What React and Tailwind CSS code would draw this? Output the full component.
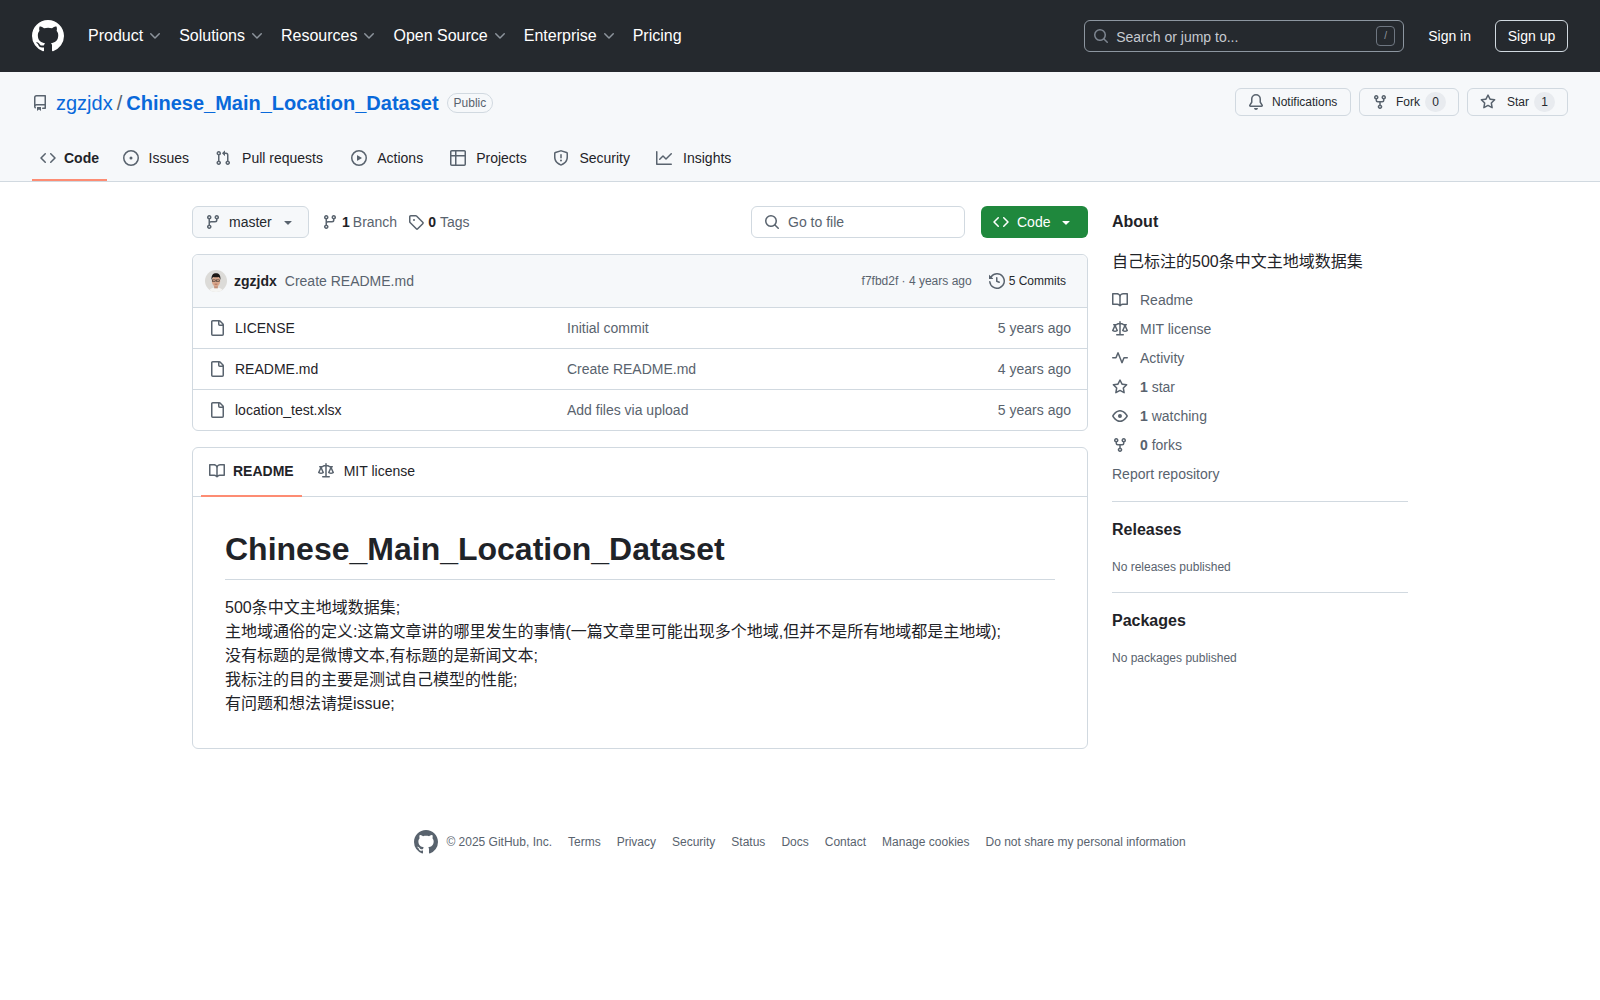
const ICONS = {
  mark: 'M8 0c4.42 0 8 3.58 8 8a8.013 8.013 0 0 1-5.45 7.59c-.4.08-.55-.17-.55-.38 0-.27.01-1.13.01-2.2 0-.75-.25-1.23-.54-1.48 1.78-.2 3.65-.88 3.65-3.95 0-.88-.31-1.59-.82-2.15.08-.2.36-1.02-.08-2.12 0 0-.67-.22-2.2.82-.64-.18-1.32-.27-2-.27-.68 0-1.36.09-2 .27-1.53-1.03-2.2-.82-2.2-.82-.44 1.1-.16 1.92-.08 2.12-.51.56-.82 1.28-.82 2.15 0 3.06 1.86 3.75 3.64 3.95-.23.2-.44.55-.51 1.07-.46.21-1.61.55-2.33-.66-.15-.24-.6-.83-1.23-.82-.67.01-.27.38.01.53.34.19.73.9.82 1.13.16.45.68 1.31 2.69.94 0 .67.01 1.3.01 1.49 0 .21-.15.45-.55.38A7.995 7.995 0 0 1 0 8c0-4.42 3.58-8 8-8Z',
  repo: 'M2 2.5A2.5 2.5 0 0 1 4.5 0h8.75a.75.75 0 0 1 .75.75v12.5a.75.75 0 0 1-.75.75h-2.5a.75.75 0 0 1 0-1.5h1.75v-2h-8a1 1 0 0 0-.714 1.7.75.75 0 1 1-1.072 1.05A2.495 2.495 0 0 1 2 11.5Zm10.5-1h-8a1 1 0 0 0-1 1v6.708A2.486 2.486 0 0 1 4.5 9h8ZM5 12.25a.25.25 0 0 1 .25-.25h3.5a.25.25 0 0 1 .25.25v3.25a.25.25 0 0 1-.4.2l-1.45-1.087a.249.249 0 0 0-.3 0L5.4 15.7a.25.25 0 0 1-.4-.2Z',
  code: 'm11.28 3.22 4.25 4.25a.75.75 0 0 1 0 1.06l-4.25 4.25a.749.749 0 0 1-1.275-.326.749.749 0 0 1 .215-.734L13.94 8l-3.72-3.72a.749.749 0 0 1 .326-1.275.749.749 0 0 1 .734.215Zm-6.56 0a.751.751 0 0 1 1.042.018.751.751 0 0 1 .018 1.042L2.06 8l3.72 3.72a.749.749 0 0 1-.326 1.275.749.749 0 0 1-.734-.215L.47 8.53a.75.75 0 0 1 0-1.06Z',
  issue: 'M8 9.5a1.5 1.5 0 1 0 0-3 1.5 1.5 0 0 0 0 3ZM8 0a8 8 0 1 1 0 16A8 8 0 0 1 8 0ZM1.5 8a6.5 6.5 0 1 0 13 0 6.5 6.5 0 0 0-13 0Z',
  pull: 'M1.5 3.25a2.25 2.25 0 1 1 3 2.122v5.256a2.251 2.251 0 1 1-1.5 0V5.372A2.25 2.25 0 0 1 1.5 3.25Zm5.677-.177L9.573.677A.25.25 0 0 1 10 .854V2.5h1A2.5 2.5 0 0 1 13.5 5v5.628a2.251 2.251 0 1 1-1.5 0V5a1 1 0 0 0-1-1h-1v1.646a.25.25 0 0 1-.427.177L7.177 3.427a.25.25 0 0 1 0-.354ZM3.75 2.5a.75.75 0 1 0 0 1.5.75.75 0 0 0 0-1.5Zm0 9.5a.75.75 0 1 0 0 1.5.75.75 0 0 0 0-1.5Zm8.25.75a.75.75 0 1 0 1.5 0 .75.75 0 0 0-1.5 0Z',
  play: 'M8 0a8 8 0 1 1 0 16A8 8 0 0 1 8 0ZM1.5 8a6.5 6.5 0 1 0 13 0 6.5 6.5 0 0 0-13 0Zm4.879-2.773 4.264 2.559a.25.25 0 0 1 0 .428l-4.264 2.559A.25.25 0 0 1 6 10.559V5.442a.25.25 0 0 1 .379-.215Z',
  table: 'M0 1.75C0 .784.784 0 1.75 0h12.5C15.216 0 16 .784 16 1.75v12.5A1.75 1.75 0 0 1 14.25 16H1.75A1.75 1.75 0 0 1 0 14.25ZM6.5 6.5v8h7.75a.25.25 0 0 0 .25-.25V6.5Zm8-1.5V1.75a.25.25 0 0 0-.25-.25H6.5V5Zm-13 1.5v7.75c0 .138.112.25.25.25H5v-8ZM5 5V1.5H1.75a.25.25 0 0 0-.25.25V5Z',
  shield: 'M7.467.133a1.748 1.748 0 0 1 1.066 0l5.25 1.68A1.75 1.75 0 0 1 15 3.48V7c0 1.566-.32 3.182-1.303 4.682-.983 1.498-2.585 2.813-5.032 3.855a1.697 1.697 0 0 1-1.33 0c-2.447-1.042-4.049-2.357-5.032-3.855C1.32 10.182 1 8.566 1 7V3.48a1.75 1.75 0 0 1 1.217-1.667Zm.61 1.429a.25.25 0 0 0-.153 0l-5.25 1.68a.25.25 0 0 0-.174.238V7c0 1.358.275 2.666 1.057 3.86.784 1.194 2.121 2.34 4.366 3.297a.196.196 0 0 0 .154 0c2.245-.956 3.582-2.104 4.366-3.298C13.225 9.666 13.5 8.36 13.5 7V3.48a.251.251 0 0 0-.174-.237l-5.25-1.68ZM8.75 4.75v3a.75.75 0 0 1-1.5 0v-3a.75.75 0 0 1 1.5 0ZM9 10.5a1 1 0 1 1-2 0 1 1 0 0 1 2 0Z',
  graph: 'M1.5 1.75V13.5h13.75a.75.75 0 0 1 0 1.5H.75a.75.75 0 0 1-.75-.75V1.75a.75.75 0 0 1 1.5 0Zm14.28 2.53-5.25 5.25a.75.75 0 0 1-1.06 0L7 7.06 4.28 9.78a.751.751 0 0 1-1.042-.018.751.751 0 0 1-.018-1.042l3.25-3.25a.75.75 0 0 1 1.06 0L10 7.94l4.72-4.72a.751.751 0 0 1 1.042.018.751.751 0 0 1 .018 1.042Z',
  bell: 'M8 16a2 2 0 0 0 1.985-1.75c.017-.137-.097-.25-.235-.25h-3.5c-.138 0-.252.113-.235.25A2 2 0 0 0 8 16ZM3 5a5 5 0 0 1 10 0v2.947c0 .05.015.098.042.139l1.703 2.555A1.519 1.519 0 0 1 13.482 13H2.518a1.516 1.516 0 0 1-1.263-2.36l1.703-2.554A.255.255 0 0 0 3 7.947Zm5-3.5A3.5 3.5 0 0 0 4.5 5v2.947c0 .346-.102.683-.294.97l-1.703 2.556a.017.017 0 0 0-.003.01l.001.006c0 .002.002.004.004.006l.006.004.007.001h10.964l.007-.001.006-.004.004-.006.001-.007a.017.017 0 0 0-.003-.01l-1.703-2.554a1.745 1.745 0 0 1-.294-.97V5A3.5 3.5 0 0 0 8 1.5Z',
  fork: 'M5 5.372v.878c0 .414.336.75.75.75h4.5a.75.75 0 0 0 .75-.75v-.878a2.25 2.25 0 1 1 1.5 0v.878a2.25 2.25 0 0 1-2.25 2.25h-1.5v2.128a2.251 2.251 0 1 1-1.5 0V8.5h-1.5A2.25 2.25 0 0 1 3.5 6.25v-.878a2.25 2.25 0 1 1 1.5 0ZM5 3.25a.75.75 0 1 0-1.5 0 .75.75 0 0 0 1.5 0Zm6.75.75a.75.75 0 1 0 0-1.5.75.75 0 0 0 0 1.5Zm-3 8.75a.75.75 0 1 0-1.5 0 .75.75 0 0 0 1.5 0Z',
  star: 'M8 .25a.75.75 0 0 1 .673.418l1.882 3.815 4.21.612a.75.75 0 0 1 .416 1.279l-3.046 2.97.719 4.192a.751.751 0 0 1-1.088.791L8 12.347l-3.766 1.98a.75.75 0 0 1-1.088-.79l.72-4.194L.818 6.374a.75.75 0 0 1 .416-1.28l4.21-.611L7.327.668A.75.75 0 0 1 8 .25Zm0 2.445L6.615 5.5a.75.75 0 0 1-.564.41l-3.097.45 2.24 2.184a.75.75 0 0 1 .216.664l-.528 3.084 2.769-1.456a.75.75 0 0 1 .698 0l2.77 1.456-.53-3.084a.75.75 0 0 1 .216-.664l2.24-2.183-3.096-.45a.75.75 0 0 1-.564-.41L8 2.694Z',
  branch: 'M9.5 3.25a2.25 2.25 0 1 1 3 2.122V6A2.5 2.5 0 0 1 10 8.5H6a1 1 0 0 0-1 1v1.128a2.251 2.251 0 1 1-1.5 0V5.372a2.25 2.25 0 1 1 1.5 0v1.836A2.493 2.493 0 0 1 6 7h4a1 1 0 0 0 1-1v-.628A2.25 2.25 0 0 1 9.5 3.25Zm-6 0a.75.75 0 1 0 1.5 0 .75.75 0 0 0-1.5 0Zm8.25-.75a.75.75 0 1 0 0 1.5.75.75 0 0 0 0-1.5ZM4.25 12a.75.75 0 1 0 0 1.5.75.75 0 0 0 0-1.5Z',
  tag: 'M1 7.775V2.75C1 1.784 1.784 1 2.75 1h5.025c.464 0 .91.184 1.238.513l6.25 6.25a1.75 1.75 0 0 1 0 2.474l-5.026 5.026a1.75 1.75 0 0 1-2.474 0l-6.25-6.25A1.752 1.752 0 0 1 1 7.775Zm1.5 0c0 .066.026.13.073.177l6.25 6.25a.25.25 0 0 0 .354 0l5.025-5.025a.25.25 0 0 0 0-.354l-6.25-6.25a.25.25 0 0 0-.177-.073H2.75a.25.25 0 0 0-.25.25ZM6 5a1 1 0 1 1 0 2 1 1 0 0 1 0-2Z',
  search: 'M10.68 11.74a6 6 0 0 1-7.922-8.982 6 6 0 0 1 8.982 7.922l3.04 3.04a.749.749 0 0 1-.326 1.275.749.749 0 0 1-.734-.215ZM11.5 7a4.499 4.499 0 1 0-8.997 0A4.499 4.499 0 0 0 11.5 7Z',
  caret: 'm4.427 7.427 3.396 3.396a.25.25 0 0 0 .354 0l3.396-3.396A.25.25 0 0 0 11.396 7H4.604a.25.25 0 0 0-.177.427Z',
  chevron: 'M12.78 5.22a.749.749 0 0 1 0 1.06l-4.25 4.25a.749.749 0 0 1-1.06 0L3.22 6.28a.749.749 0 1 1 1.06-1.06L8 8.939l3.72-3.719a.749.749 0 0 1 1.06 0Z',
  history: 'm.427 1.927 1.215 1.215a8.002 8.002 0 1 1-1.6 5.685.75.75 0 1 1 1.493-.154 6.5 6.5 0 1 0 1.18-4.458l1.358 1.358A.25.25 0 0 1 3.896 6H.25A.25.25 0 0 1 0 5.75V2.104a.25.25 0 0 1 .427-.177ZM7.75 4a.75.75 0 0 1 .75.75v2.992l2.028.812a.75.75 0 0 1-.557 1.392l-2.5-1A.751.751 0 0 1 7 8.25v-3.5A.75.75 0 0 1 7.75 4Z',
  file: 'M2 1.75C2 .784 2.784 0 3.75 0h6.586c.464 0 .909.184 1.237.513l2.914 2.914c.329.328.513.773.513 1.237v9.586A1.75 1.75 0 0 1 13.25 16h-9.5A1.75 1.75 0 0 1 2 14.25Zm1.75-.25a.25.25 0 0 0-.25.25v12.5c0 .138.112.25.25.25h9.5a.25.25 0 0 0 .25-.25V6h-2.75A1.75 1.75 0 0 1 9 4.25V1.5Zm6.75.062V4.25c0 .138.112.25.25.25h2.688l-.011-.013-2.914-2.914-.013-.011Z',
  book: 'M0 1.75A.75.75 0 0 1 .75 1h4.253c1.227 0 2.317.59 3 1.501A3.743 3.743 0 0 1 11.006 1h4.245a.75.75 0 0 1 .75.75v10.5a.75.75 0 0 1-.75.75h-4.507a2.25 2.25 0 0 0-1.591.659l-.622.621a.75.75 0 0 1-1.06 0l-.622-.621A2.25 2.25 0 0 0 5.258 13H.75a.75.75 0 0 1-.75-.75Zm7.251 10.324.004-5.073-.002-2.253A2.25 2.25 0 0 0 5.003 2.5H1.5v9h3.757a3.75 3.75 0 0 1 1.994.574ZM8.755 4.75l-.004 7.322a3.752 3.752 0 0 1 1.992-.572H14.5v-9h-3.495a2.25 2.25 0 0 0-2.25 2.25Z',
  law: 'M8.75.75V2h.985c.304 0 .603.08.867.231l1.29.736c.038.022.08.033.124.033h2.234a.75.75 0 0 1 0 1.5h-.427l2.111 4.692a.75.75 0 0 1-.154.838l-.53-.53.529.531-.001.002-.002.002-.006.006-.006.005-.01.01-.045.04c-.21.176-.441.327-.686.45C14.556 10.78 13.88 11 13 11a4.498 4.498 0 0 1-2.023-.454 3.544 3.544 0 0 1-.686-.45l-.045-.04-.016-.015-.006-.006-.004-.004v-.001a.75.75 0 0 1-.154-.838L12.178 4.5h-.162c-.305 0-.604-.079-.868-.231l-1.29-.736a.245.245 0 0 0-.124-.033H8.75V13h2.5a.75.75 0 0 1 0 1.5h-6.5a.75.75 0 0 1 0-1.5h2.5V3.5h-.984a.245.245 0 0 0-.124.033l-1.289.737c-.265.15-.564.23-.869.23h-.162l2.112 4.692a.75.75 0 0 1-.154.838l-.53-.53.529.531-.001.002-.002.002-.006.006-.016.015-.045.04c-.21.176-.441.327-.686.45C4.556 10.78 3.88 11 3 11a4.498 4.498 0 0 1-2.023-.454 3.544 3.544 0 0 1-.686-.45l-.045-.04-.016-.015-.006-.006-.004-.004v-.001a.75.75 0 0 1-.154-.838L2.178 4.5H1.75a.75.75 0 0 1 0-1.5h2.234a.249.249 0 0 0 .125-.033l1.288-.737c.265-.15.564-.23.869-.23h.984V.75a.75.75 0 0 1 1.5 0Zm2.945 8.477c.285.135.718.273 1.305.273s1.02-.138 1.305-.273L13 6.327Zm-10 0c.285.135.718.273 1.305.273s1.02-.138 1.305-.273L3 6.327Z',
  pulse: 'M6 2c.306 0 .582.187.696.471L10 10.731l1.304-3.26A.751.751 0 0 1 12 7h3.25a.75.75 0 0 1 0 1.5h-2.742l-1.812 4.528a.751.751 0 0 1-1.392 0L6 4.77 4.696 8.03A.75.75 0 0 1 4 8.5H.75a.75.75 0 0 1 0-1.5h2.742l1.812-4.529A.751.751 0 0 1 6 2Z',
  eye: 'M8 2c1.981 0 3.671.992 4.933 2.078 1.27 1.091 2.187 2.345 2.637 3.023a1.62 1.62 0 0 1 0 1.798c-.45.678-1.367 1.932-2.637 3.023C11.67 13.008 9.981 14 8 14c-1.981 0-3.671-.992-4.933-2.078C1.797 10.83.88 9.576.43 8.898a1.62 1.62 0 0 1 0-1.798c.45-.677 1.367-1.931 2.637-3.022C4.33 2.992 6.019 2 8 2ZM1.679 7.932a.12.12 0 0 0 0 .136c.411.622 1.241 1.75 2.366 2.717C5.176 11.758 6.527 12.5 8 12.5c1.473 0 2.825-.742 3.955-1.715 1.124-.967 1.954-2.096 2.366-2.717a.12.12 0 0 0 0-.136c-.412-.621-1.242-1.75-2.366-2.717C10.824 4.242 9.473 3.5 8 3.5c-1.473 0-2.825.742-3.955 1.715-1.124.967-1.954 2.096-2.366 2.717ZM8 10a2 2 0 1 1-.001-3.999A2 2 0 0 1 8 10Z',
}

function Icon({ name, size = 16, className = '' }) {
  return (
    <svg viewBox="0 0 16 16" width={size} height={size} fill="currentColor" className={`shrink-0 ${className}`}>
      <path d={ICONS[name]} />
    </svg>
  )
}

function Avatar() {
  return (
    <svg viewBox="0 0 24 24" width="22" height="22" className="shrink-0 rounded-full">
      <rect width="24" height="24" fill="#dcdbd8" />
      <path d="M4 24c1-4 4-5 8-5s7 1 8 5Z" fill="#f5f5f3" />
      <rect x="10" y="16" width="4" height="4" fill="#c08f78" />
      <ellipse cx="12" cy="12" rx="4.600" ry="6" fill="#d9a78c" />
      <path d="M7.200 11C6.500 5.500 9 3.500 12 3.500s5.500 2 4.800 7.500c-.4-2-1-3-1.800-3.500-2 .5-4 .5-6 0-.8.500-1.400 1.500-1.800 3.500Z" fill="#1d1917" />
      <rect x="8.200" y="10.800" width="3.200" height="1.700" fill="none" stroke="#2e2826" strokeWidth="0.6" />
      <rect x="12.600" y="10.800" width="3.200" height="1.700" fill="none" stroke="#2e2826" strokeWidth="0.6" />
      <path d="M10.500 15.500h3" stroke="#96513f" strokeWidth="0.7" />
    </svg>
  )
}

const NAV = ['Product', 'Solutions', 'Resources', 'Open Source', 'Enterprise']
const TABS = [
  ['code', 'Code'],
  ['issue', 'Issues'],
  ['pull', 'Pull requests'],
  ['play', 'Actions'],
  ['table', 'Projects'],
  ['shield', 'Security'],
  ['graph', 'Insights'],
]
const FILES = [
  ['LICENSE', 'Initial commit', '5 years ago'],
  ['README.md', 'Create README.md', '4 years ago'],
  ['location_test.xlsx', 'Add files via upload', '5 years ago'],
]
const FOOTER = ['Terms', 'Privacy', 'Security', 'Status', 'Docs', 'Contact', 'Manage cookies', 'Do not share my personal information']
const README_LINES = [
  '500条中文主地域数据集;',
  '主地域通俗的定义:这篇文章讲的哪里发生的事情(一篇文章里可能出现多个地域,但并不是所有地域都是主地域);',
  '没有标题的是微博文本,有标题的是新闻文本;',
  '我标注的目的主要是测试自己模型的性能;',
  '有问题和想法请提issue;',
]

function Header() {
  return (
    <header className="h-[72px] bg-[#25292e] px-8 flex items-center text-white">
      <Icon name="mark" size={32} className="mr-4" />
      <nav className="flex items-center text-base">
        {NAV.map((item) => (
          <div key={item} className="flex items-center px-2 gap-1">
            {item}
            <Icon name="chevron" className="text-[#8d949c]" />
          </div>
        ))}
        <div className="px-2">Pricing</div>
      </nav>
      <div className="ml-auto w-80 h-8 rounded-md border border-[#8d96a0] flex items-center px-2 text-sm text-[#c5cad0]">
        <Icon name="search" className="text-[#7d8590] mr-[7px]" />
        <span className="pt-px">Search or jump to...</span>
        <span className="ml-auto w-[19px] h-[20px] border border-[#6e7681] rounded-[4px] flex items-center justify-center text-[10px] text-[#9198a1]">/</span>
      </div>
      <span className="ml-6 text-sm">Sign in</span>
      <span className="ml-6 h-8 w-[73px] flex items-center justify-center text-sm border border-[#d1d9e0] rounded-md">Sign up</span>
    </header>
  )
}

function ActionButton({ icon, label, count, className }) {
  return (
    <div className={`h-7 flex items-center pl-3 border border-[#d1d9e0] rounded-md text-xs font-medium text-[#25292e] ${className}`}>
      <Icon name={icon} className="text-[#59636e]" />
      <span>{label}</span>
      {count && <span className="pill w-[21px] h-5 rounded-full bg-[#e8ebef] flex items-center justify-center text-[#25292e]">{count}</span>}
    </div>
  )
}

function RepoHeader() {
  return (
    <div className="bg-[#f6f8fa] border-b border-[#d1d9e0]">
      <div className="px-8 pt-4 flex items-start">
        <div className="flex items-center h-[30px]">
          <Icon name="repo" className="text-[#59636e] mr-2" />
          <span className="text-xl text-[#0969da]">zgzjdx</span>
          <span className="text-xl text-[#59636e] mx-1">/</span>
          <span className="text-xl font-bold text-[#0969da]">Chinese_Main_Location_Dataset</span>
          <span className="ml-2 h-5 px-[6px] border border-[#d1d9e0] rounded-full text-xs flex items-center text-[#59636e]">Public</span>
        </div>
        <div className="ml-auto flex gap-2">
          <ActionButton icon="bell" label="Notifications" className="w-[116px] gap-2" />
          <ActionButton icon="fork" label="Fork" count="0" className="w-[100px] gap-2 [&>.pill]:-ml-[3px]" />
          <ActionButton icon="star" label="Star" count="1" className="w-[101px] gap-[11px] [&>.pill]:-ml-[6px]" />
        </div>
      </div>
      <nav className="px-8 mt-[17px] flex gap-2 text-sm text-[#1f2328]">
        {TABS.map(([icon, label], i) => (
          <div key={label} className={`h-[46px] pt-[2px] flex items-center gap-2 px-2 border-b-2 ${i === 0 ? 'border-[#fd8c73] font-bold' : 'border-transparent'}`}>
            <Icon name={icon} className="text-[#59636e]" />
            <span className="grid justify-items-center">
              <span className="col-start-1 row-start-1">{label}</span>
              <span className="col-start-1 row-start-1 font-bold invisible">{label}</span>
            </span>
          </div>
        ))}
      </nav>
    </div>
  )
}

function FileBar() {
  return (
    <div className="flex items-center h-8 text-sm">
      <div className="h-8 w-[117px] border border-[#d1d9e0] rounded-md bg-[#f6f8fa] flex items-center pl-3 text-[#25292e]">
        <Icon name="branch" className="text-[#59636e]" />
        <span className="ml-[8px]">master</span>
        <Icon name="caret" className="text-[#59636e] ml-[8px]" />
      </div>
      <div className="ml-[13px] flex items-center text-[#59636e]">
        <Icon name="branch" />
        <b className="ml-1 text-[#1f2328]">1</b>
        <span className="ml-[3px]">Branch</span>
      </div>
      <div className="ml-[11px] flex items-center text-[#59636e]">
        <Icon name="tag" />
        <b className="ml-1 text-[#1f2328]">0</b>
        <span className="ml-1">Tags</span>
      </div>
      <div className="ml-auto w-[214px] h-8 border border-[#d1d9e0] rounded-md flex items-center pl-3 text-[#59636e]">
        <Icon name="search" className="mr-2" />
        Go to file
      </div>
      <div className="ml-4 w-[107px] h-8 rounded-md bg-[#1f883d] text-white font-medium flex items-center pl-3">
        <Icon name="code" />
        <span className="ml-2">Code</span>
        <Icon name="caret" className="ml-2" />
      </div>
    </div>
  )
}

function FileTable() {
  return (
    <div className="mt-4 border border-[#d1d9e0] rounded-md text-sm">
      <div className="h-[52px] bg-[#f6f8fa] rounded-t-md flex items-center pl-3 pr-[21px]">
        <Avatar />
        <b className="ml-[7px] text-[#1f2328]">zgzjdx</b>
        <span className="ml-2 text-[#59636e]">Create README.md</span>
        <span className="ml-auto text-xs text-[#59636e]">f7fbd2f · 4 years ago</span>
        <Icon name="history" className="ml-[17px] text-[#59636e]" />
        <span className="ml-[4px] text-xs font-medium text-[#25292e]">5 Commits</span>
      </div>
      {FILES.map(([name, msg, age]) => (
        <div key={name} className="h-[41px] border-t border-[#d1d9e0] flex items-center pl-4 pr-4">
          <Icon name="file" className="text-[#59636e]" />
          <span className="ml-[10px] w-[332px] text-[#1f2328]">{name}</span>
          <span className="text-[#59636e]">{msg}</span>
          <span className="ml-auto text-[#59636e]">{age}</span>
        </div>
      ))}
    </div>
  )
}

function Readme() {
  return (
    <div className="mt-4 border border-[#d1d9e0] rounded-md">
      <div className="h-[49px] border-b border-[#d1d9e0] flex items-stretch pl-2 text-sm text-[#1f2328]">
        <div className="flex items-center gap-2 px-2 pb-[2px] border-b-2 border-[#fd8c73] font-bold -mb-px">
          <Icon name="book" className="text-[#59636e]" />
          README
        </div>
        <div className="flex items-center gap-2 px-2 pb-[3px] ml-2 text-[#59636e]">
          <Icon name="law" />
          <span className="ml-[2px] text-[#1f2328]">MIT license</span>
        </div>
      </div>
      <article className="p-8 text-[#1f2328]">
        <h1 className="text-[32px] leading-[40px] font-bold border-b border-[#d1d9e0] pb-[10px] mb-4">Chinese_Main_Location_Dataset</h1>
        <div className="text-base leading-6">
          {README_LINES.map((line) => (
            <div key={line}>{line}</div>
          ))}
        </div>
      </article>
    </div>
  )
}

function SideRow({ icon, children }) {
  return (
    <div className="h-[29px] flex items-center text-sm text-[#59636e]">
      <Icon name={icon} className="mr-3" />
      {children}
    </div>
  )
}

function Sidebar() {
  return (
    <aside className="w-[296px] shrink-0 text-[#1f2328]">
      <h2 className="text-base font-bold leading-[32px]">About</h2>
      <p className="mt-3 text-base leading-6">自己标注的500条中文主地域数据集</p>
      <div className="mt-[11px]">
        <SideRow icon="book">Readme</SideRow>
        <SideRow icon="law">MIT license</SideRow>
        <SideRow icon="pulse">Activity</SideRow>
        <SideRow icon="star"><b>1</b>&nbsp;star</SideRow>
        <SideRow icon="eye"><b>1</b>&nbsp;watching</SideRow>
        <SideRow icon="fork"><b>0</b>&nbsp;forks</SideRow>
        <div className="h-[29px] flex items-center text-sm text-[#59636e]">Report repository</div>
      </div>
      <div className="mt-[13px] border-t border-[#d1d9e0] pt-4">
        <h2 className="text-base font-bold leading-6">Releases</h2>
        <p className="mt-[15px] text-xs leading-5 text-[#59636e]">No releases published</p>
      </div>
      <div className="mt-[15px] border-t border-[#d1d9e0] pt-4">
        <h2 className="text-base font-bold leading-6">Packages</h2>
        <p className="mt-[15px] text-xs leading-5 text-[#59636e]">No packages published</p>
      </div>
    </aside>
  )
}

function Footer() {
  return (
    <footer className="mt-[81px] flex justify-center items-center text-xs text-[#59636e]">
      <Icon name="mark" size={24} className="mr-2" />
      <span>© 2025 GitHub, Inc.</span>
      <div className="flex gap-4 ml-4">
        {FOOTER.map((item) => (
          <span key={item}>{item}</span>
        ))}
      </div>
    </footer>
  )
}

export default function App() {
  return (
    <div className="min-h-[1000px] bg-white font-['Liberation_Sans','Noto_Sans_CJK_SC',sans-serif]">
      <Header />
      <RepoHeader />
      <main className="w-[1216px] mx-auto pt-6 flex gap-6">
        <div className="w-[896px] shrink-0">
          <FileBar />
          <FileTable />
          <Readme />
        </div>
        <Sidebar />
      </main>
      <Footer />
    </div>
  )
}
